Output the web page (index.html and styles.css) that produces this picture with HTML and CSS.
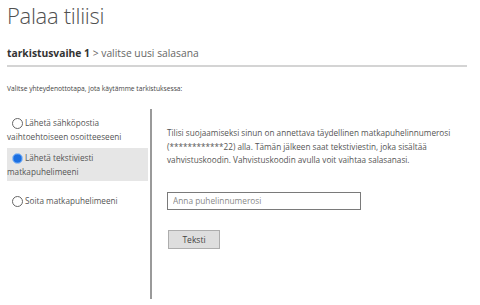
FILE: index.html
```html
<!DOCTYPE html>
<html lang="fi">
<head>
<meta charset="utf-8">
<title>Palaa tiliisi</title>
<link rel="stylesheet" href="styles.css">
</head>
<body>
<div class="page">
  <h1 class="title">Palaa tiliisi</h1>
  <div class="crumbs"><span class="step">tarkistusvaihe 1</span> &gt; valitse uusi salasana</div>
  <p class="intro">Valitse yhteydenottotapa, jota käytämme tarkistuksessa:</p>
  <div class="main">
    <div class="options">
      <label class="option"><span class="radio"></span>Lähetä sähköpostia vaihtoehtoiseen osoitteeseeni</label>
      <label class="option selected"><span class="radio on"></span>Lähetä tekstiviesti matkapuhelimeeni</label>
      <label class="option"><span class="radio"></span>Soita matkapuhelimeeni</label>
    </div>
    <div class="detail">
      <p class="desc">Tilisi suojaamiseksi sinun on annettava täydellinen matkapuhelinnumerosi (************22) alla. Tämän jälkeen saat tekstiviestin, joka sisältää vahvistuskoodin. Vahvistuskoodin avulla voit vaihtaa salasanasi.</p>
      <div class="field"><input class="phone" type="text" placeholder="Anna puhelinnumerosi"></div>
      <button class="btn" type="button">Teksti</button>
    </div>
  </div>
</div>
</body>
</html>
```
FILE: styles.css
```css
html, body { margin: 0; padding: 0; background: #fff; }
body { font-family: "Open Sans", "Noto Sans", sans-serif; color: #555; }
.page { padding: 0 13px 0 7px; height: 305px; display: flex; flex-direction: column; box-sizing: border-box; }
.title { margin: 0; padding-top: 1px; font-weight: 300; font-size: 22px; line-height: 28px; color: #505050; letter-spacing: -0.3px; }
.crumbs { margin-top: 17px; padding-bottom: 4px; border-bottom: 2px solid #d4d4d4; font-size: 10.3px; line-height: 15px; color: #666; }
.step { font-weight: 700; color: #333; }
.intro { margin: 15px 0 0; padding-top: 1px; font-size: 6.7px; line-height: 12px; color: #444; }
.main { flex: 1; display: flex; margin-top: 14px; }
.options { width: 141px; padding-top: 7px; margin-right: 2px; }
.option { display: block; font-size: 8.2px; line-height: 14px; color: #555; }
.option.selected { background: #e6e6e6; padding: 3px 0 2px; margin-top: 4px; }
.option.selected + .option { margin-top: 13px; }
.radio { display: inline-block; box-sizing: border-box; width: 11px; height: 11px; border: 1px solid #666; border-radius: 50%; vertical-align: -2.5px; margin: 0 2px 0 5px; background: #fff; }
.radio.on { border-color: #8cbaf0; background: radial-gradient(circle, #1c6fe0 0 3.8px, #3b86ef 3.8px); }
.detail { flex: 1; border-left: 2px solid #9a9a9a; padding: 17px 0 0 15px; margin-bottom: 6px; }
.desc { margin: 0; font-size: 8.2px; line-height: 13.5px; color: #555; max-width: 295px; }
.field { display: flex; margin-top: 25px; }
.phone { box-sizing: border-box; width: 194px; height: 18px; border: 1px solid #7a7a7a; padding: 0 5px; font-family: inherit; font-size: 8.3px; color: #333; outline: none; }
.phone::placeholder { color: #888; }
.btn { display: block; margin-top: 20px; margin-left: 1px; box-sizing: border-box; width: 52px; height: 19px; background: #dedede; border: 1px solid #adadad; font-family: inherit; font-size: 8.5px; color: #444; padding: 0; }
```
